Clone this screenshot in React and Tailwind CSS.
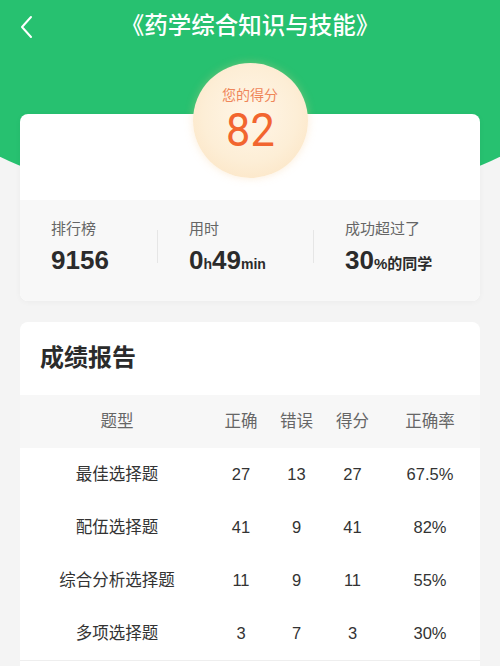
import React from "react";

const rows = [
  { name: "最佳选择题", ok: 27, bad: 13, score: 27, rate: "67.5%" },
  { name: "配伍选择题", ok: 41, bad: 9, score: 41, rate: "82%" },
  { name: "综合分析选择题", ok: 11, bad: 9, score: 11, rate: "55%" },
  { name: "多项选择题", ok: 3, bad: 7, score: 3, rate: "30%" },
];

const font = { fontFamily: '"Liberation Sans", "Noto Sans CJK SC", sans-serif' };

export default function App() {
  return (
    <div className="w-[500px] h-[666px] overflow-hidden bg-[#f4f4f4]" style={font}>
      {/* green header with curved bottom */}
      <div className="-mx-[50px] h-[202px] bg-[#27c170] rounded-b-[50%_101px] px-[50px]">
        <div className="relative flex h-[54px] items-center justify-center">
          <svg
            className="absolute left-[19px] top-[15px]"
            width="16"
            height="24"
            viewBox="0 0 16 24"
            fill="none"
            stroke="white"
            strokeWidth="2"
            strokeLinecap="round"
            strokeLinejoin="round"
          >
            <path d="M12 2 L3 12 L12 22" />
          </svg>
          <h1 className="text-[23.5px] font-medium text-white">《药学综合知识与技能》</h1>
        </div>
      </div>

      {/* score card */}
      <div className="mx-[20px] -mt-[88px] rounded-[8px] bg-white shadow-[0_1px_6px_rgba(0,0,0,0.04)]">
        <div className="flex justify-center pb-[22px]">
          <div className="-mt-[51px] flex h-[115px] w-[115px] flex-col items-center rounded-full bg-[radial-gradient(circle_at_50%_45%,#fff6e8_0%,#fdeed6_55%,#fbe1bd_100%)] shadow-[0_0_8px_rgba(245,200,140,0.35)]">
            <div className="mt-[24px] text-[14px] leading-[16px] text-[#ef8659]">您的得分</div>
            <div
              className="mt-[7px] scale-x-[0.92] text-[47px] leading-[40px] font-normal text-[#f2652f]"
              style={{ fontFamily: "Roboto, sans-serif" }}
            >
              82
            </div>
          </div>
        </div>
        <div className="flex rounded-b-[8px] bg-[#f8f8f8] pt-[19px] pb-[22px]">
          <div className="w-[137px] pl-[31px]">
            <div className="text-[15px] leading-[20px] text-[#666]">排行榜</div>
            <div className="mt-[6px] text-[26px] leading-[30px] font-bold text-[#2b2b2b]">9156</div>
          </div>
          <div className="mt-[11px] h-[33px] w-px bg-[#e6e6e6]" />
          <div className="w-[155px] pl-[31px]">
            <div className="text-[15px] leading-[20px] text-[#666]">用时</div>
            <div className="mt-[6px] leading-[30px] font-bold text-[#2b2b2b]">
              <span className="text-[26px]">0</span>
              <span className="text-[14px]">h</span>
              <span className="text-[26px]">49</span>
              <span className="text-[14px]">min</span>
            </div>
          </div>
          <div className="mt-[11px] h-[33px] w-px bg-[#e6e6e6]" />
          <div className="flex-1 pl-[31px]">
            <div className="text-[15px] leading-[20px] text-[#666]">成功超过了</div>
            <div className="mt-[6px] leading-[30px] font-bold text-[#2b2b2b]">
              <span className="text-[26px]">30</span>
              <span className="text-[15px]">%的同学</span>
            </div>
          </div>
        </div>
      </div>

      {/* report card */}
      <div className="mx-[20px] mt-[21px] rounded-t-[8px] bg-white">
        <h2 className="px-[20px] pt-[21px] pb-[22px] text-[24px] leading-[30px] font-bold text-[#2b2b2b]">成绩报告</h2>
        <div className="grid h-[53px] grid-cols-[194px_54px_57px_55px_100px] items-center bg-[#f7f7f7] text-[16.5px] text-[#666] text-center">
          <div>题型</div>
          <div>正确</div>
          <div>错误</div>
          <div>得分</div>
          <div>正确率</div>
        </div>
        {rows.map((r) => (
          <div
            key={r.name}
            className="grid h-[53px] grid-cols-[194px_54px_57px_55px_100px] items-center text-[16.5px] text-[#333] text-center"
          >
            <div>{r.name}</div>
            <div>{r.ok}</div>
            <div>{r.bad}</div>
            <div>{r.score}</div>
            <div>{r.rate}</div>
          </div>
        ))}
        <div className="h-px bg-[#eeeeee]" />
        <div className="h-[20px]" />
      </div>
    </div>
  );
}
